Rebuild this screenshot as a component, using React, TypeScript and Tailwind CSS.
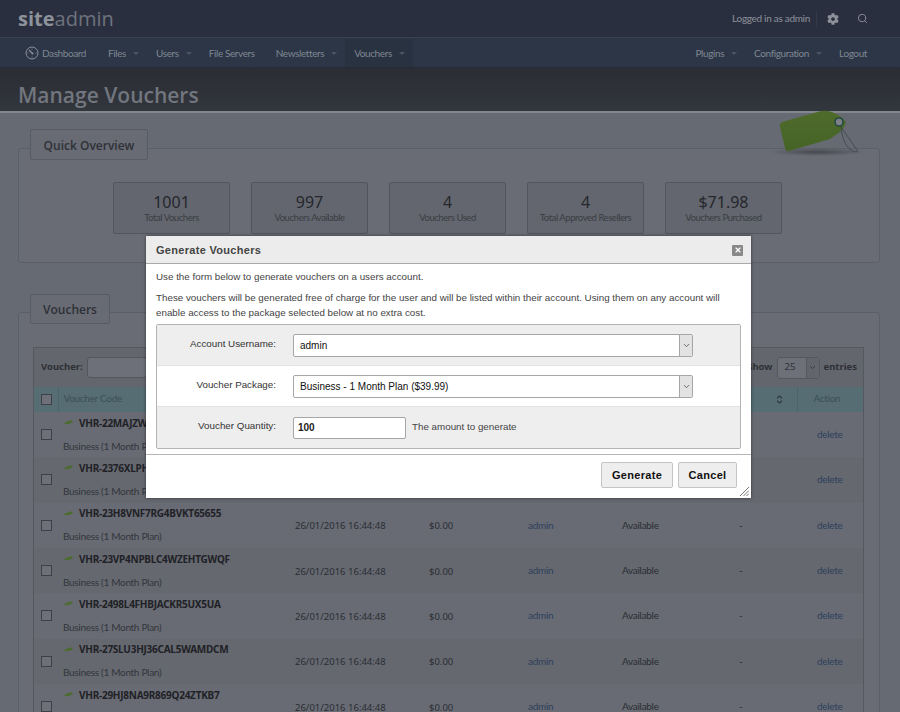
import React from "react";
import { Search, ChevronDown, X } from "lucide-react";
import { FaCog } from "react-icons/fa";

const stats = [
  ["1001", "Total Vouchers"],
  ["997", "Vouchers Available"],
  ["4", "Vouchers Used"],
  ["4", "Total Approved Resellers"],
  ["$71.98", "Vouchers Purchased"],
];

const codes = [
  "VHR-22MAJZWQ8NK7TLC4RPX3",
  "VHR-2376XLPH5DKW9GBT4MEA",
  "VHR-23H8VNF7RG4BVKT65655",
  "VHR-23VP4NPBLC4WZEHTGWQF",
  "VHR-2498L4FHBJACKR5UX5UA",
  "VHR-27SLU3HJ36CAL5WAMDCM",
  "VHR-29HJ8NA9R869Q24ZTKB7",
];

function Caret() {
  return <span className="ml-[7px] mr-[-1px] inline-block h-0 w-0 border-x-[3px] border-t-[3px] border-x-transparent border-t-[#4a5464]" />;
}

function NavItem({ label, caret, active }: { label: string; caret?: boolean; active?: boolean }) {
  return (
    <div className={`flex h-full items-center pl-[9px] ${caret ? "pr-[9px]" : "pr-[12px]"} ${active ? "bg-[#293240]" : ""}`}>
      <span>{label}</span>
      {caret && <Caret />}
    </div>
  );
}

function Tag() {
  return (
    <svg className="absolute left-[750px] top-[90px]" width="130" height="80" viewBox="750 90 130 80" fill="none">
      <defs>
        <radialGradient id="tagShadow">
          <stop offset="0" stopColor="#45484f" />
          <stop offset="1" stopColor="#45484f" stopOpacity="0" />
        </radialGradient>
        <linearGradient id="tagFill" x1="0" y1="0" x2="0" y2="1">
          <stop offset="0" stopColor="#4f6b2c" />
          <stop offset="1" stopColor="#456426" />
        </linearGradient>
      </defs>
      <ellipse cx="817" cy="152" rx="48" ry="4" fill="url(#tagShadow)" />
      <path d="M782 122 L821 111 Q826 110 832 112 Q842 116 846 122 Q845 127 840 132 L830 139 L789 151 Q786 152 785 148 L780 127 Q779 123 782 122 Z" fill="url(#tagFill)" />
      <circle cx="839" cy="122" r="4" fill="#7d8089" stroke="#234a45" strokeWidth="1.6" />
      <path d="M841 127 C846 135 852 142 857 150 C859 153 854 152 851 150 C845 146 842 137 841 127 Z" stroke="#3f434b" strokeWidth="0.8" />
    </svg>
  );
}

function FakeSelect({ text }: { text: string }) {
  return (
    <div className="flex h-[23px] w-[400px] items-stretch rounded-[2px] border border-[#a6a6a6] bg-white">
      <div className="flex flex-1 items-center pl-[6px] text-[10px] text-[#111]">{text}</div>
      <div className="flex w-[13px] items-center justify-center border-l border-[#a6a6a6] bg-[#e2e2e2]">
        <ChevronDown size={9} strokeWidth={2} className="text-[#444]" />
      </div>
    </div>
  );
}

function Row({ code, idx }: { code: string; idx: number }) {
  const bg = idx % 2 === 0 ? "bg-[#686b73]" : "bg-[#65686f]";
  return (
    <tr className={`h-[45.33px] ${bg} font-['Lato',sans-serif] text-[10px] tracking-[-0.3px] text-[#2a2d33]`}>
      <td className="pl-[7px] align-middle">
        <span className="block h-[11px] w-[11px] border border-[#3d4047] bg-[#6d7078]" />
      </td>
      <td className="pb-[1px] pl-[5px] align-middle">
        <div className="flex items-center">
          <svg width="9" height="5" viewBox="0 0 9 5" className="mr-[6px] ml-[1px]">
            <path d="M0 3 L6 0.5 L9 1 L7.5 3 L2 4.5 Z" fill="#4b6c2c" />
          </svg>
          <span className="font-['Noto_Sans',sans-serif] text-[10px] font-bold leading-[14px] tracking-[-0.25px] text-[#1f2126]">{code}</span>
        </div>
        <div className="mt-[9px] leading-[14px] text-[#33363c]">Business (1 Month Plan)</div>
      </td>
      <td className="pl-[12px] pt-[2px] font-['Noto_Sans',sans-serif] text-[9.5px] tracking-normal">26/01/2016 16:44:48</td>
      <td className="pl-[13px] pt-[2px] font-['Noto_Sans',sans-serif] text-[9.5px] tracking-normal">$0.00</td>
      <td className="pl-[12px] text-[#2d3f5c]">admin</td>
      <td className="pl-[12px]">Available</td>
      <td className="pl-[13px]">-</td>
      <td className="pl-[20px] text-[#2d3f5c]">delete</td>
    </tr>
  );
}

export default function App() {
  return (
    <div className="relative h-[712px] w-[900px] overflow-hidden bg-[#666a72] font-['Lato',sans-serif]">
      <header className="flex h-[38px] items-center justify-between border-b border-[#3a4250] bg-[#2a2f3f] pl-[18px] pr-[32px]">
        <div className="font-['Open_Sans',sans-serif] text-[20px] leading-none text-[#6e737d]">
          <span className="font-bold text-[#8e929a]">site</span>admin
        </div>
        <div className="flex items-center text-[10px] tracking-[-0.3px] text-[#8d919a]">
          <span>Logged in as admin</span>
          <span className="ml-[6px] mr-[10px] h-[16px] w-px bg-[#343a49]" />
          <FaCog size={12} className="text-[#8d919a]" />
          <Search size={11} strokeWidth={2} className="ml-[18px] text-[#8d919a]" />
        </div>
      </header>

      <nav className="flex h-[30px] items-center justify-between border-b border-[#252c38] bg-[#2c3646] pl-[16px] pr-[21px] pt-[1px] text-[10px] tracking-[-0.4px] text-[#7f8692]">
        <div className="flex h-full items-center">
          <div className="flex h-full items-center pl-[9px] pr-[13px]">
            <svg width="14" height="14" viewBox="0 0 14 14" fill="none" className="mr-[3px]">
              <circle cx="7" cy="7" r="6" stroke="#8b919c" strokeWidth="1" />
              <path d="M4 4 L7.5 7.5" stroke="#8b919c" strokeWidth="1.2" />
              <circle cx="7.5" cy="7.5" r="1" fill="#8b919c" />
              <path d="M7 2.5 V3.5 M11.5 7 H10.5 M2.5 7 H3.5 M7 11.5 V10.5" stroke="#8b919c" strokeWidth="0.8" />
            </svg>
            <span>Dashboard</span>
          </div>
          <NavItem label="Files" caret />
          <NavItem label="Users" caret />
          <NavItem label="File Servers" />
          <NavItem label="Newsletters" caret />
          <NavItem label="Vouchers" caret active />
        </div>
        <div className="flex h-full items-center">
          <NavItem label="Plugins" caret />
          <NavItem label="Configuration" caret />
          <NavItem label="Logout" />
        </div>
      </nav>

      <div className="flex h-[45px] items-center border-b-2 border-[#83868d] bg-[linear-gradient(#2a2d33,#32363d)] pl-[18px] pt-[13px] font-['Open_Sans',sans-serif] text-[21px] font-semibold text-[#72767e]">
        Manage Vouchers
      </div>

      <main className="pl-[18px] pr-[20px]">
        <div className="relative z-10 mt-[16px] -mb-[12px] ml-[12px] flex h-[31px] w-[118px] items-center justify-center rounded-[2px] border border-[#585b63] bg-[#686b73] pt-[2px] font-['Open_Sans',sans-serif] text-[12px] font-semibold text-[#2e3138]">
          Quick Overview
        </div>
        <section className="flex h-[115px] justify-center gap-[21px] rounded-[3px] border border-[#5c5f67] bg-[#696c74] pr-[3px] pt-[33px]">
          {stats.map(([n, l]) => (
            <div key={l} className="flex h-[52px] w-[117px] flex-col items-center rounded-[2px] border border-[#52555c] bg-[#63666e] pt-[9px]">
              <div className="font-['Noto_Sans',sans-serif] text-[16px] leading-[20px] text-[#25272c]">{n}</div>
              <div className="text-[9.5px] leading-[11px] tracking-[-0.45px] text-[#3a3d43]">{l}</div>
            </div>
          ))}
        </section>

        <div className="relative z-10 mt-[31px] -mb-[12px] ml-[12px] flex h-[30px] w-[80px] items-center justify-center rounded-[2px] border border-[#585b63] bg-[#686b73] pt-[2px] font-['Open_Sans',sans-serif] text-[12px] font-semibold text-[#2e3138]">
          Vouchers
        </div>
        <section className="h-[420px] rounded-[3px] border border-[#5c5f67] bg-[#696c74] pl-[14px] pr-[15px] pt-[34px]">
          <div className="h-[400px] border border-[#55585f]">
            <div className="flex h-[39px] items-center justify-between bg-[#63666d] pl-[7px] pr-[6px] font-['Noto_Sans',sans-serif] text-[9.5px] font-bold text-[#2e3036]">
              <div className="flex items-center gap-[4px]">
                <span>Voucher:</span>
                <span className="h-[21px] w-[60px] rounded-[3px] border border-[#54575e] bg-[#6d7078]" />
              </div>
              <div className="flex items-center gap-[4px]">
                <span>Show</span>
                <div className="flex h-[22px] w-[43px] rounded-[3px] border border-[#54575e] bg-[#6d7078]">
                  <span className="flex flex-1 items-center pl-[7px] font-normal">25</span>
                  <span className="flex w-[13px] items-center justify-center border-l border-[#54575e] bg-[#62656c]">
                    <ChevronDown size={9} className="text-[#2e3036]" />
                  </span>
                </div>
                <span>entries</span>
              </div>
            </div>
            <table className="w-[829px] table-fixed border-collapse">
              <colgroup>
                <col className="w-[24px]" />
                <col className="w-[225px]" />
                <col className="w-[133px]" />
                <col className="w-[100px]" />
                <col className="w-[94px]" />
                <col className="w-[116px]" />
                <col className="w-[71px]" />
                <col className="w-[66px]" />
              </colgroup>
              <thead>
                <tr className="h-[25px] bg-[#556d73] text-left text-[10px] font-normal tracking-[-0.3px] text-[#3d4f57]">
                  <th className="border-r border-[#4d646a] pl-[7px] font-normal">
                    <span className="block h-[11px] w-[11px] border border-[#3d4047] bg-[#6d7078]" />
                  </th>
                  <th className="pl-[5px] pb-[2px] font-normal">Voucher Code</th>
                  <th />
                  <th />
                  <th />
                  <th />
                  <th className="border-r border-[#4d646a] pl-[50px] font-normal">
                    <svg width="7" height="9" viewBox="0 0 7 9" fill="none">
                      <path d="M1 3.2 L3.5 1 L6 3.2 M1 5.8 L3.5 8 L6 5.8" stroke="#2c3a40" strokeWidth="1.2" />
                    </svg>
                  </th>
                  <th className="pl-[16px] pb-[2px] font-normal">Action</th>
                </tr>
              </thead>
              <tbody>
                {codes.map((c, i) => (
                  <Row key={c} code={c} idx={i} />
                ))}
              </tbody>
            </table>
          </div>
        </section>
      </main>

      <Tag />

      <div className="absolute left-[146px] top-[236px] z-20 flex h-[262px] w-[605px] flex-col bg-white font-['Liberation_Sans',sans-serif] text-[#333] shadow-[0_0_3px_rgba(0,0,0,0.5)]">
        <div className="flex h-[28px] items-center justify-between border-b border-[#a9a9a9] bg-[#ececec] pl-[10px] pr-[8px] pt-[1px]">
          <span className="text-[11px] font-bold tracking-[0.3px] text-[#444]">Generate Vouchers</span>
          <span className="flex h-[11px] w-[11px] items-center justify-center rounded-[1px] bg-[#888]">
            <X size={8} strokeWidth={3.5} className="text-white" />
          </span>
        </div>
        <div className="px-[10px] pt-[5px] text-[9.8px] leading-[15px] text-[#444]">
          <p>Use the form below to generate vouchers on a users account.</p>
          <p className="mt-[6px]">
            These vouchers will be generated free of charge for the user and will be listed within their account. Using them on any account will enable access to the package selected below at no extra cost.
          </p>
        </div>
        <div className="mx-[10px] mt-[4px] flex h-[125px] flex-col rounded-[2px] border border-[#b3b3b3] text-[9.8px] text-[#333]">
          <div className="flex h-[41px] items-center border-b border-[#e2e2e2] bg-[#eeeeee] pl-[10px]">
            <span className="w-[109px] pb-[2px] text-right">Account Username:</span>
            <span className="ml-[17px]"><FakeSelect text="admin" /></span>
          </div>
          <div className="flex h-[41px] items-center border-b border-[#e2e2e2] bg-white pl-[10px]">
            <span className="w-[109px] pb-[2px] text-right">Voucher Package:</span>
            <span className="ml-[17px]"><FakeSelect text="Business - 1 Month Plan ($39.99)" /></span>
          </div>
          <div className="flex flex-1 items-center bg-[#eeeeee] pl-[10px]">
            <span className="w-[109px] pb-[2px] text-right">Voucher Quantity:</span>
            <input readOnly value="100" className="ml-[17px] h-[22px] w-[113px] rounded-[2px] border border-[#a6a6a6] bg-white pl-[4px] text-[10px] font-bold text-[#222] outline-none" />
            <span className="ml-[6px] text-[9.8px] text-[#444]">The amount to generate</span>
          </div>
        </div>
        <div className="mt-[5px] flex flex-1 items-start justify-end gap-[5px] border-t border-[#b5b5b5] pr-[14px] pt-[7px]">
          <button className="flex h-[26px] w-[72px] items-center justify-center rounded-[2px] border border-[#c4c4c4] bg-[#eeeeee] text-[11px] font-bold tracking-[0.3px] text-[#111]">Generate</button>
          <button className="flex h-[26px] w-[59px] items-center justify-center rounded-[2px] border border-[#c4c4c4] bg-[#eeeeee] text-[11px] font-bold tracking-[0.3px] text-[#111]">Cancel</button>
        </div>
        <svg className="absolute bottom-[2px] right-[2px]" width="9" height="9" viewBox="0 0 9 9" stroke="#555" strokeWidth="0.8">
          <path d="M0 9 L9 0 M3.5 9 L9 3.5 M6.5 9 L9 6.5" />
        </svg>
      </div>
    </div>
  );
}
